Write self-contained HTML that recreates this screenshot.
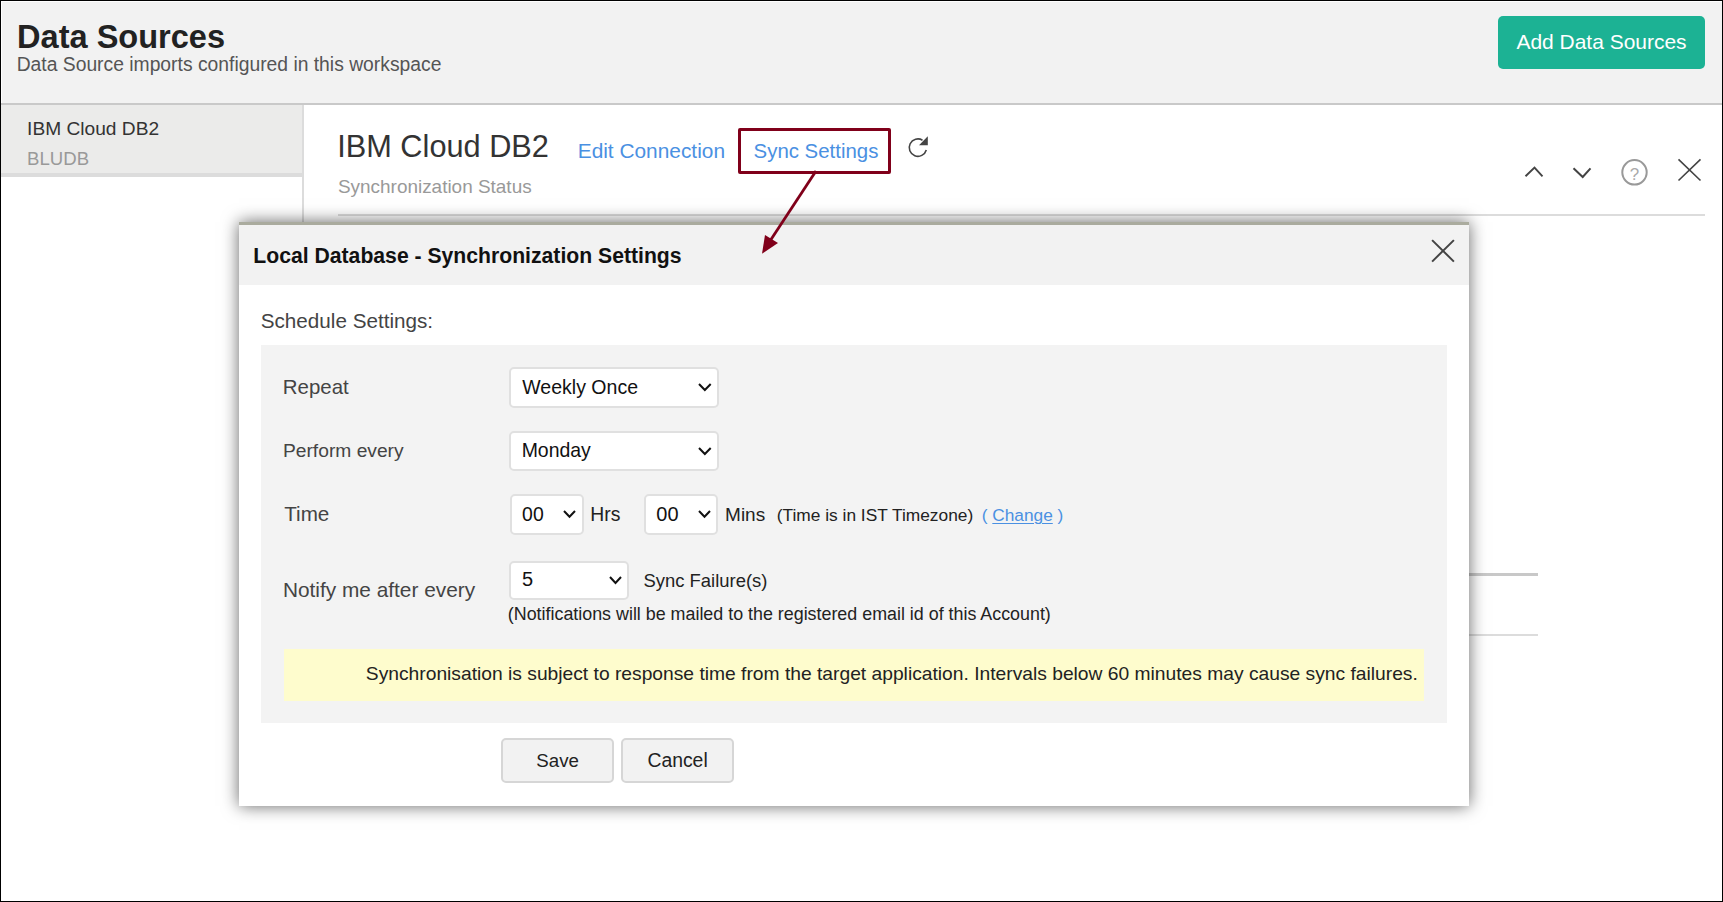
<!DOCTYPE html>
<html><head><meta charset="utf-8"><title>Data Sources</title><style>
*{margin:0;padding:0;box-sizing:border-box}
html,body{width:1723px;height:902px;overflow:hidden;background:#fff}
body{position:relative;font-family:"Liberation Sans",sans-serif}
.a{position:absolute}
.t{position:absolute;white-space:nowrap;line-height:1;font-family:"Liberation Sans",sans-serif}
u{text-decoration:underline;text-underline-offset:2px;text-decoration-thickness:1px}
</style></head>
<body>
<div class="a" style="left:1px;top:1px;width:1721px;height:102px;background:#f2f2f2;border-top:1px solid #fff;border-left:1px solid #fff;"></div>
<div class="a" style="left:1px;top:103px;width:1721px;height:2px;background:#c9c9c9;"></div>
<div class="a" style="left:1px;top:105px;width:301px;height:68px;background:#ebebea;"></div>
<div class="a" style="left:1px;top:173px;width:301px;height:4px;background:#dcdcdc;"></div>
<div class="a" style="left:302px;top:105px;width:2px;height:701px;background:#dcdcdc;"></div>
<div class="a" style="left:338px;top:214px;width:1367px;height:2px;background:#dcdcdc;"></div>
<div class="a" style="left:338px;top:573px;width:1200px;height:3px;background:#c8c8c8;"></div>
<div class="a" style="left:338px;top:634px;width:1200px;height:2px;background:#dcdcdc;"></div>
<div class="a" style="left:1498px;top:16px;width:207px;height:53px;background:#1cb294;border-radius:5px;"></div>
<svg class="a" style="left:1515px;top:150px" width="200" height="50"><polyline points="10.5,26.3 19.5,17.6 27.5,26.3" fill="none" stroke="#444" stroke-width="1.9"/><polyline points="58.5,18.3 67.7,27 75.5,18.3" fill="none" stroke="#444" stroke-width="2"/><circle cx="119.5" cy="22.3" r="12.2" fill="none" stroke="#999" stroke-width="2"/><path d="M163.5,9.3 L185.5,30.5 M185.5,9.3 L163.5,30.5" stroke="#444" stroke-width="1.6"/></svg>
<div class="t" id="q" style="left:1629.8px;top:165.5px;font-size:17px;color:#aaa;">?</div>
<svg class="a" style="left:900px;top:128px" width="40" height="40"><path d="M22.5,12.2 A8.7,8.7 0 1 0 26.3,22.0" fill="none" stroke="#444" stroke-width="1.6"/><path d="M27.8,8.2 L27.8,17.2 L19.0,17.2 Z" fill="#444"/></svg>
<div class="a" style="left:239px;top:222px;width:1230px;height:584px;background:#fff;box-shadow:0 0 16px rgba(0,0,0,0.6);"></div>
<div class="a" style="left:239px;top:222px;width:1230px;height:3px;background:#aaab9e;"></div>
<div class="a" style="left:239px;top:225px;width:1230px;height:60px;background:#f2f2f2;"></div>
<svg class="a" style="left:1420px;top:230px" width="45" height="45"><path d="M12.1,10.1 L33.9,31.6 M33.9,10.1 L12.1,31.6" stroke="#444" stroke-width="2"/></svg>
<div class="a" style="left:261px;top:345px;width:1186px;height:378px;background:#f3f3f3;"></div>
<div class="a" style="left:284px;top:649px;width:1140px;height:52px;background:#fefccd;"></div>
<div class="a" style="left:509px;top:367px;width:210px;height:41px;background:#fff;border:2px solid #e0e0e0;border-radius:5px;"></div>
<svg class="a" style="left:696.2px;top:381px" width="17.7" height="12"><polyline points="3.0,3.0 8.85,9.0 14.7,3.0" fill="none" stroke="#111" stroke-width="2"/></svg>
<div class="a" style="left:509px;top:431px;width:210px;height:40px;background:#fff;border:2px solid #e0e0e0;border-radius:5px;"></div>
<svg class="a" style="left:696.2px;top:444.5px" width="17.7" height="12"><polyline points="3.0,3.0 8.85,9.0 14.7,3.0" fill="none" stroke="#111" stroke-width="2"/></svg>
<div class="a" style="left:510px;top:494px;width:74px;height:41px;background:#fff;border:2px solid #e0e0e0;border-radius:5px;"></div>
<svg class="a" style="left:561.4px;top:508.2px" width="17" height="11.7"><polyline points="3.0,3.0 8.5,8.7 14.0,3.0" fill="none" stroke="#111" stroke-width="2"/></svg>
<div class="a" style="left:644px;top:494px;width:74px;height:41px;background:#fff;border:2px solid #e0e0e0;border-radius:5px;"></div>
<svg class="a" style="left:695.6px;top:508.2px" width="17" height="11.7"><polyline points="3.0,3.0 8.5,8.7 14.0,3.0" fill="none" stroke="#111" stroke-width="2"/></svg>
<div class="a" style="left:509px;top:561px;width:120px;height:39px;background:#fff;border:2px solid #e0e0e0;border-radius:5px;"></div>
<svg class="a" style="left:606.5px;top:574.2px" width="17" height="12"><polyline points="3.0,3.0 8.5,9.0 14.0,3.0" fill="none" stroke="#111" stroke-width="2"/></svg>
<div class="a" style="left:501px;top:738px;width:113px;height:45px;background:#f2f2f2;border:2px solid #d6d6d6;border-radius:5px;"></div>
<div class="a" style="left:621px;top:738px;width:113px;height:45px;background:#f2f2f2;border:2px solid #d6d6d6;border-radius:5px;"></div>
<div class="t" id="t_ds" style="left:17.05px;top:20.64px;font-size:32.56px;color:#222;font-weight:bold;">Data Sources</div>
<div class="t" id="t_sub" style="left:16.66px;top:54.95px;font-size:19.31px;color:#555;">Data Source imports configured in this workspace</div>
<div class="t" id="t_add" style="left:1516.40px;top:31.34px;font-size:20.98px;color:#fff;">Add Data Sources</div>
<div class="t" id="t_sb1" style="left:27.07px;top:119.27px;font-size:19.17px;color:#333;">IBM Cloud DB2</div>
<div class="t" id="t_sb2" style="left:27.11px;top:149.77px;font-size:18.58px;color:#999;">BLUDB</div>
<div class="t" id="t_ibm" style="left:337.23px;top:132.19px;font-size:30.73px;color:#333;">IBM Cloud DB2</div>
<div class="t" id="t_ss" style="left:337.94px;top:178.25px;font-size:18.96px;color:#999;">Synchronization Status</div>
<div class="t" id="t_edit" style="left:577.73px;top:140.63px;font-size:20.87px;color:#4a90e2;">Edit Connection</div>
<div class="t" id="t_sync" style="left:753.58px;top:140.71px;font-size:20.42px;color:#4a90e2;">Sync Settings</div>
<div class="t" id="t_dlg" style="left:253.33px;top:244.67px;font-size:21.18px;color:#111;font-weight:bold;">Local Database - Synchronization Settings</div>
<div class="t" id="t_sched" style="left:260.77px;top:310.90px;font-size:20.67px;color:#444;">Schedule Settings:</div>
<div class="t" id="t_rep" style="left:282.87px;top:376.51px;font-size:20.43px;color:#444;">Repeat</div>
<div class="t" id="t_perf" style="left:282.96px;top:441.22px;font-size:19.23px;color:#444;">Perform every</div>
<div class="t" id="t_time" style="left:284.19px;top:504.10px;font-size:20.67px;color:#444;">Time</div>
<div class="t" id="t_notify" style="left:282.93px;top:580.46px;font-size:20.84px;color:#444;">Notify me after every</div>
<div class="t" id="t_weekly" style="left:522.30px;top:377.88px;font-size:19.52px;color:#111;">Weekly Once</div>
<div class="t" id="t_monday" style="left:521.64px;top:440.84px;font-size:19.44px;color:#111;">Monday</div>
<div class="t" id="t_h00" style="left:522.12px;top:504.58px;font-size:19.4px;color:#111;">00</div>
<div class="t" id="t_hrs" style="left:590.25px;top:504.80px;font-size:19.37px;color:#222;">Hrs</div>
<div class="t" id="t_m00" style="left:656.30px;top:504.09px;font-size:19.98px;color:#111;">00</div>
<div class="t" id="t_mins" style="left:725.08px;top:505.12px;font-size:18.99px;color:#222;">Mins</div>
<div class="t" id="t_tz" style="left:776.76px;top:506.93px;font-size:17.33px;color:#222;">(Time is in IST Timezone)</div>
<div class="t" id="t_chg" style="left:981.76px;top:506.97px;font-size:17.28px;color:#4a90e2;">( <u>Change</u> )</div>
<div class="t" id="t_5" style="left:521.90px;top:569.47px;font-size:20.0px;color:#111;">5</div>
<div class="t" id="t_fail" style="left:643.56px;top:571.60px;font-size:18.43px;color:#222;">Sync Failure(s)</div>
<div class="t" id="t_noti" style="left:507.83px;top:605.87px;font-size:17.87px;color:#222;">(Notifications will be mailed to the registered email id of this Account)</div>
<div class="t" id="t_warn" style="left:365.83px;top:664.21px;font-size:19.24px;color:#222;">Synchronisation is subject to response time from the target application. Intervals below 60 minutes may cause sync failures.</div>
<div class="t" id="t_save" style="left:536.35px;top:751.67px;font-size:18.7px;color:#222;">Save</div>
<div class="t" id="t_cancel" style="left:647.43px;top:751.11px;font-size:19.36px;color:#222;">Cancel</div>
<div class="a" style="left:738px;top:128px;width:153px;height:46px;border:3px solid #80001a;border-radius:2px;"></div>
<svg class="a" style="left:700px;top:160px" width="150" height="110"><line x1="116" y1="11" x2="70" y2="81" stroke="#80001a" stroke-width="2.8"/><path d="M62,93.7 L65,75 L78,83 Z" fill="#80001a"/></svg>
<div class="a" style="left:0;top:0;width:1723px;height:902px;border:1px solid #000;"></div>
</body></html>
